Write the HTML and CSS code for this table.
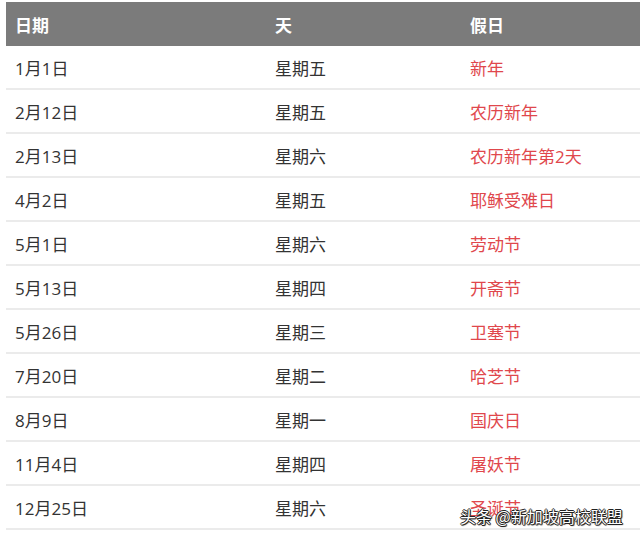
FILE: index.html
```html
<!DOCTYPE html>
<html lang="zh">
<head>
<meta charset="utf-8">
<link rel="stylesheet" href="styles.css">
</head>
<body>
<div class="page">
<table class="holidays">
  <thead>
    <tr><th class="c1">日期</th><th class="c2">天</th><th class="c3">假日</th></tr>
  </thead>
  <tbody>
    <tr><td>1月1日</td><td>星期五</td><td class="hol">新年</td></tr>
    <tr><td>2月12日</td><td>星期五</td><td class="hol">农历新年</td></tr>
    <tr><td>2月13日</td><td>星期六</td><td class="hol">农历新年第2天</td></tr>
    <tr><td>4月2日</td><td>星期五</td><td class="hol">耶稣受难日</td></tr>
    <tr><td>5月1日</td><td>星期六</td><td class="hol">劳动节</td></tr>
    <tr><td>5月13日</td><td>星期四</td><td class="hol">开斋节</td></tr>
    <tr><td>5月26日</td><td>星期三</td><td class="hol">卫塞节</td></tr>
    <tr><td>7月20日</td><td>星期二</td><td class="hol">哈芝节</td></tr>
    <tr><td>8月9日</td><td>星期一</td><td class="hol">国庆日</td></tr>
    <tr><td>11月4日</td><td>星期四</td><td class="hol">屠妖节</td></tr>
    <tr><td>12月25日</td><td>星期六</td><td class="hol">圣诞节</td></tr>
  </tbody>
</table>
<div class="watermark">头条 @新加坡高校联盟</div>
</div>
</body>
</html>
```
FILE: styles.css
```css
html, body {
  margin: 0;
  padding: 0;
  background: #ffffff;
}
.page {
  position: relative;
  width: 640px;
  height: 539px;
  overflow: hidden;
  padding-top: 2px;
  padding-left: 6px;
  box-sizing: border-box;
}
.holidays {
  border-collapse: collapse;
  width: 634px;
  table-layout: fixed;
  font-family: "Open Sans", "Noto Sans CJK SC", sans-serif;
  font-size: 17px;
}
.holidays th {
  background: #7b7b7b;
  color: #ffffff;
  font-weight: bold;
  text-align: left;
  height: 44px;
  padding: 0 0 0 9px;
  font-family: "Noto Sans CJK SC", sans-serif;
  font-size: 17px;
}
.holidays th.c1 { width: 251px; }
.holidays th.c2 { width: 186px; }
.holidays td {
  height: 42px;
  padding: 0 0 0 9px;
  color: #333333;
  border-bottom: 2px solid #ebebeb;
  white-space: nowrap;
}
.holidays td.hol {
  color: #e0474c;
}
.watermark {
  position: absolute;
  left: 460px;
  top: 504px;
  font-family: "Noto Sans CJK SC", sans-serif;
  font-size: 16px;
  color: #ffffff;
  text-shadow: 1px 0 0 #222, -1px 0 0 #222, 0 1px 0 #222, 0 -1px 0 #222, 1px 1px 1px #222;
}
```
